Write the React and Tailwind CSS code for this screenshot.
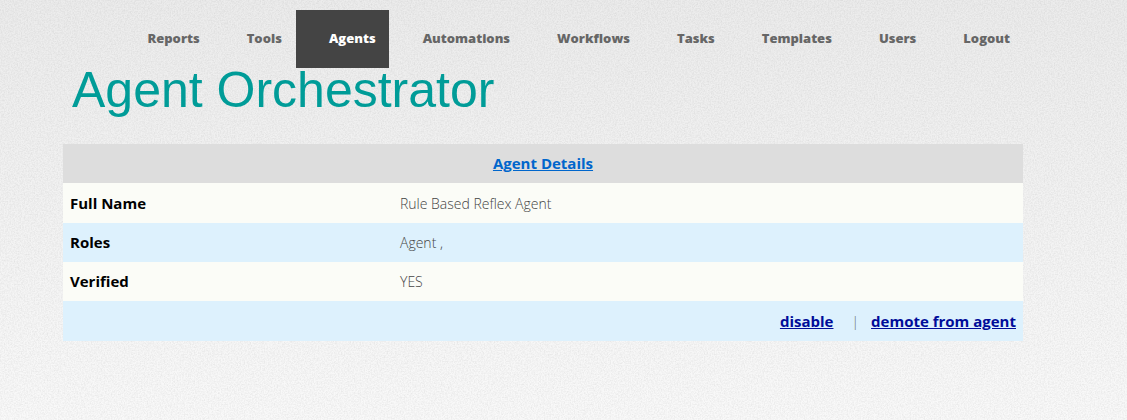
const links = [
  "Reports",
  "Tools",
  "Agents",
  "Automations",
  "Workflows",
  "Tasks",
  "Templates",
  "Users",
  "Logout",
];

const details = [
  { label: "Full Name", value: "Rule Based Reflex Agent", row: "h-10 bg-[#fbfcf7]" },
  { label: "Roles", value: "Agent ,", row: "h-[39px] bg-[#ddf1fd]" },
  { label: "Verified", value: "YES", row: "h-[39px] bg-[#fbfcf7]" },
];

function PaperGrain() {
  return (
    <svg className="absolute inset-0 -z-10 h-full w-full" aria-hidden="true">
      <filter id="grain" x="0" y="0" width="100%" height="100%">
        <feTurbulence type="fractalNoise" baseFrequency="0.7" numOctaves="3" seed="4" />
        <feColorMatrix values="0 0 0 0 0  0 0 0 0 0  0 0 0 0 0  0.12 0 0 0 -0.04" />
      </filter>
      <rect width="100%" height="100%" filter="url(#grain)" />
    </svg>
  );
}

function NavLink({ name, active }) {
  return (
    <a
      href={"#" + name.toLowerCase()}
      aria-current={active ? "page" : undefined}
      className={
        active
          ? "flex h-[58px] items-center bg-[#444444] pr-[13px] pl-[33px] text-white"
          : "flex h-[58px] items-center pr-[13px] pl-[33px] text-[#666666]"
      }
    >
      {name}
    </a>
  );
}

export default function App() {
  return (
    <div className="relative isolate min-h-screen bg-linear-to-b from-[#ececec] to-[#f9f9f9] pt-2.5 pr-26 pl-[63px] font-['Open_Sans',sans-serif]">
      <PaperGrain />
      <header>
        <nav className="flex justify-end gap-px text-[13px] font-extrabold">
          {links.map((name) => (
            <NavLink key={name} name={name} active={name === "Agents"} />
          ))}
        </nav>
        <h1 className="pl-[9px] font-['Liberation_Sans',Arial,sans-serif] text-[50px] leading-[44px] text-[#009c98]">
          Agent Orchestrator
        </h1>
      </header>
      <main className="pt-8">
        <table className="w-full table-fixed text-[15px]">
          <colgroup>
            <col className="w-[330px]" />
            <col />
          </colgroup>
          <thead>
            <tr className="h-[39px] bg-[#dddddd]">
              <th colSpan={2} className="font-bold">
                <a href="#details" className="text-[#0066cc] underline">
                  Agent Details
                </a>
              </th>
            </tr>
          </thead>
          <tbody>
            {details.map((item) => (
              <tr key={item.label} className={item.row}>
                <th scope="row" className="px-[7px] text-left font-bold text-black">
                  {item.label}
                </th>
                <td className="px-[7px] text-[14px] font-light text-[#444444]">{item.value}</td>
              </tr>
            ))}
            <tr className="h-10 bg-[#ddf1fd]">
              <td colSpan={2} className="px-[7px]">
                <div className="flex items-center justify-end font-bold text-[#000c99]">
                  <a href="#disable" className="underline">
                    disable
                  </a>
                  <span className="pr-3 pl-[18px] text-[14px] font-light text-[#666666]">|</span>
                  <a href="#demote" className="underline">
                    demote from agent
                  </a>
                </div>
              </td>
            </tr>
          </tbody>
        </table>
      </main>
    </div>
  );
}
